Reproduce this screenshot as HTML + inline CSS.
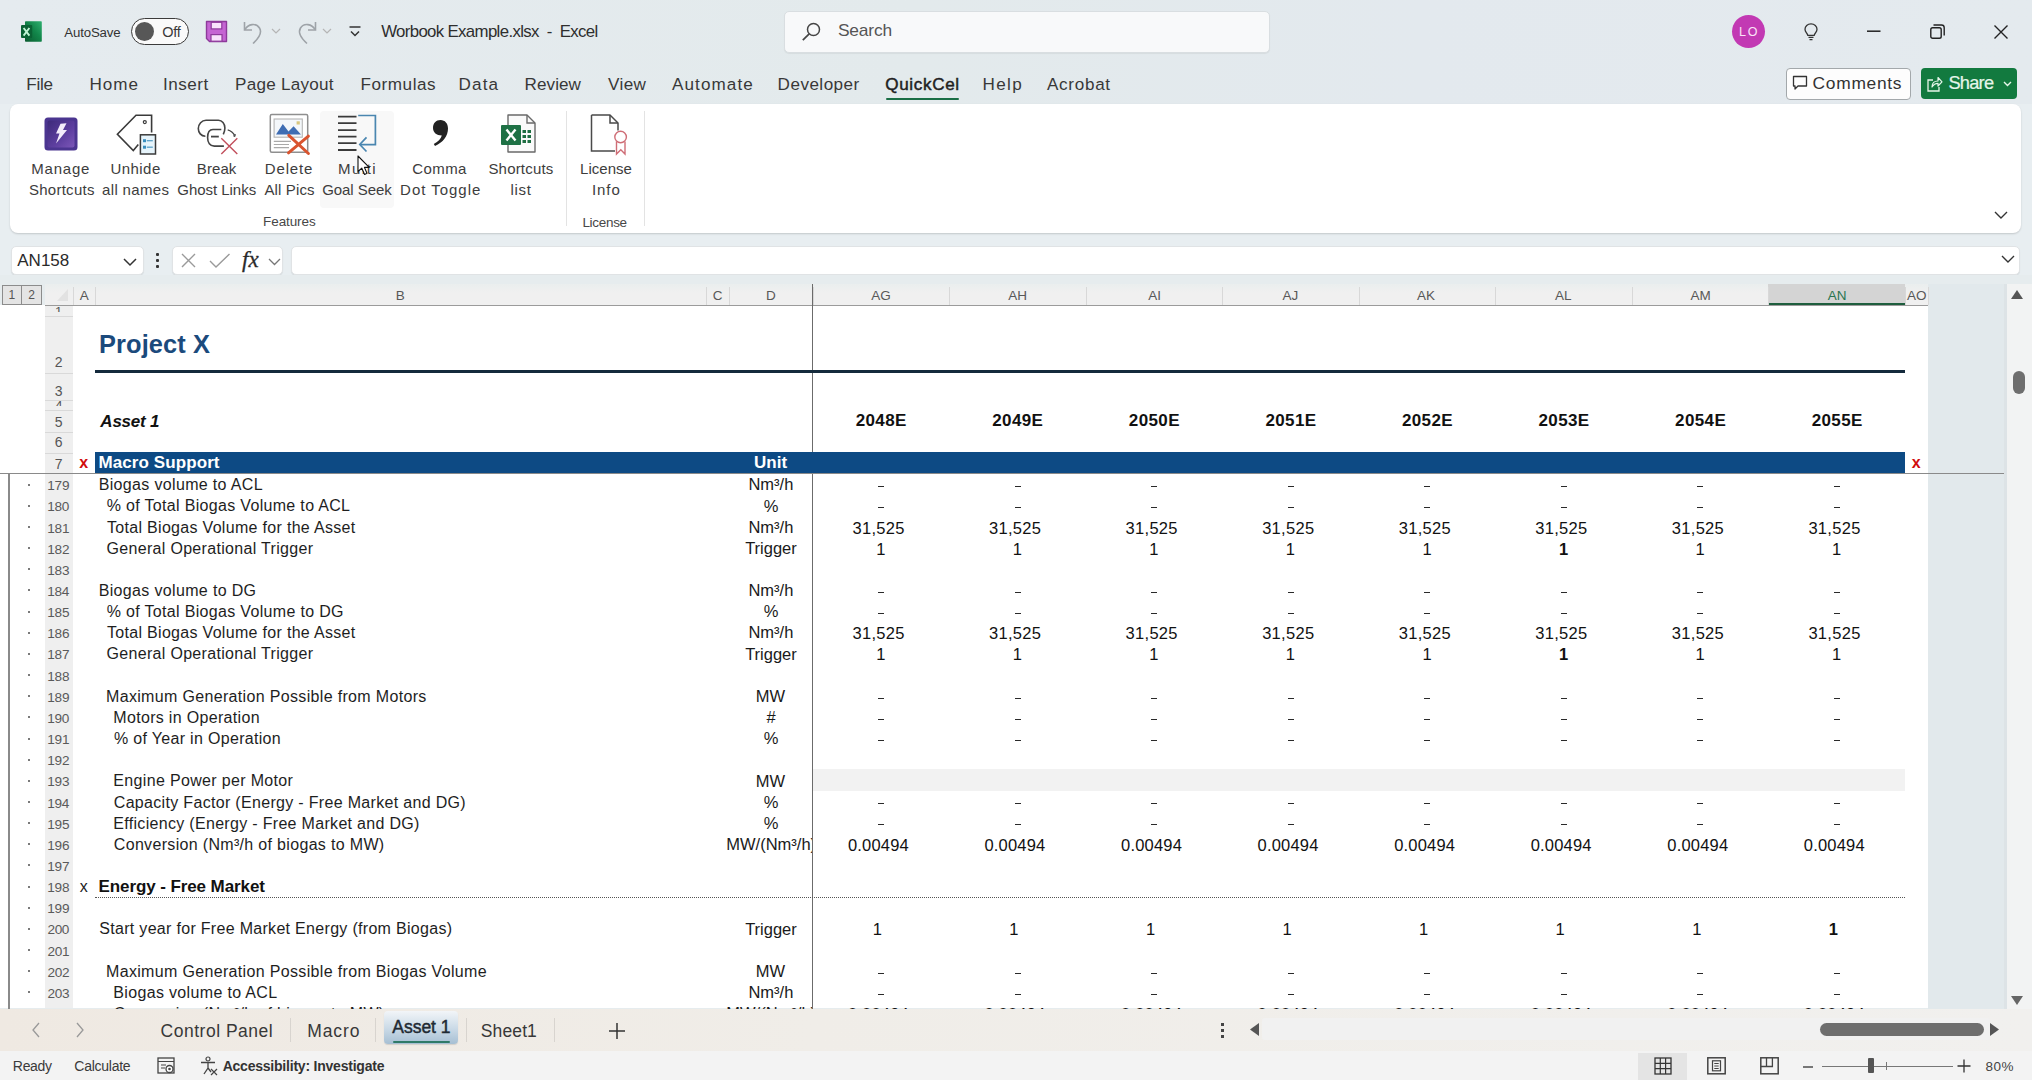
<!DOCTYPE html>
<html><head><meta charset="utf-8">
<style>
*{margin:0;padding:0;box-sizing:border-box}
html,body{width:2032px;height:1080px;overflow:hidden;background:#e8eef1;font-family:"Liberation Sans",sans-serif}
.a{position:absolute}
.t{position:absolute;white-space:nowrap;line-height:1;font-family:"Liberation Sans",sans-serif}
svg{position:absolute;overflow:visible}
</style></head><body>

<div class="a" style="left:0px;top:0px;width:2032px;height:104px;background:linear-gradient(90deg,#e5ebef,#e3eaec 45%,#e3e9ee 70%,#e4eaee)"></div>
<svg style="left:20px;top:20px" width="24" height="24" viewBox="0 0 24 24"><defs><linearGradient id="xg" x1="1" y1="0" x2="0" y2="1"><stop offset="0" stop-color="#2fb070"/><stop offset="0.45" stop-color="#12864a"/><stop offset="1" stop-color="#0a5a2f"/></linearGradient></defs>
<rect x="5" y="1.2" width="16.8" height="20.6" rx="0.8" fill="url(#xg)"/>
<rect x="1" y="5" width="11.2" height="13" rx="1" fill="#0a6234"/>
<path d="M3.6 8 L9.4 15.6 M9.4 8 L3.6 15.6" stroke="#bff5d4" stroke-width="1.9"/></svg>
<div class="t" style="left:64.27px;top:25.65px;font-size:13.26px;color:#333;letter-spacing:-0.156px;">AutoSave</div>
<div class="a" style="left:131px;top:18px;width:58px;height:27px;border:1.5px solid #3b3b3b;border-radius:14px;background:#fafafa"></div>
<div class="a" style="left:135px;top:22px;width:19px;height:19px;border-radius:50%;background:#575757"></div>
<div class="t" style="left:162.21px;top:24.61px;font-size:14.49px;color:#3a3a3a;letter-spacing:-0.249px;">Off</div>
<svg style="left:205px;top:20px" width="24" height="24" viewBox="0 0 24 24"><path d="M1.5 1.5 H21.5 V21.5 H4.5 L1.5 18.5 Z" fill="#c565d3" stroke="#8e3a9b" stroke-width="1.4" stroke-linejoin="round"/>
<rect x="6.2" y="2.3" width="10.6" height="6.6" fill="#f9e2fc" stroke="#8e3a9b" stroke-width="1.2"/>
<rect x="6" y="14.6" width="11" height="6.6" fill="#f9e2fc" stroke="#8e3a9b" stroke-width="1.2"/></svg>
<svg style="left:241px;top:19px" width="26" height="26" viewBox="0 0 26 26"><path d="M3.5 3 V11 H11" stroke="#9ea3a8" stroke-width="1.6" fill="none"/>
<path d="M4 10.5 C7 5 15 3.5 18.5 9 C21.5 14 17 20 12 24.5" stroke="#9ea3a8" stroke-width="1.6" fill="none"/></svg>
<svg style="left:271px;top:28px" width="10" height="7" viewBox="0 0 10 7"><path d="M1 1 L5 5 L9 1" stroke="#b5b5b5" stroke-width="1.2" fill="none"/></svg>
<svg style="left:293px;top:19px" width="26" height="26" viewBox="0 0 26 26"><path d="M22.5 3 V11 H15" stroke="#9ea3a8" stroke-width="1.6" fill="none"/>
<path d="M22 10.5 C19 5 11 3.5 7.5 9 C4.5 14 9 20 14 24.5" stroke="#9ea3a8" stroke-width="1.6" fill="none"/></svg>
<svg style="left:322px;top:28px" width="10" height="7" viewBox="0 0 10 7"><path d="M1 1 L5 5 L9 1" stroke="#b5b5b5" stroke-width="1.2" fill="none"/></svg>
<svg style="left:348px;top:25px" width="14" height="14" viewBox="0 0 14 14"><path d="M1.5 2 H12.5" stroke="#333" stroke-width="1.5"/><path d="M3 6.5 L7 10.5 L11 6.5" stroke="#333" stroke-width="1.5" fill="none"/></svg>
<div class="t" style="left:381.13px;top:23.84px;font-size:16.81px;color:#2e2e2e;letter-spacing:-0.644px;white-space:pre;">Worbook Example.xlsx  -  Excel</div>
<div class="a" style="left:784px;top:11px;width:486px;height:42px;background:#f8f9fa;border:1px solid #d9dee1;border-radius:5px;box-shadow:0 1px 1px rgba(0,0,0,0.06)"></div>
<svg style="left:800px;top:21px" width="22" height="22" viewBox="0 0 22 22"><circle cx="13.5" cy="8.5" r="6" stroke="#454545" stroke-width="1.5" fill="none"/><path d="M9.2 12.8 L2.8 19.2" stroke="#454545" stroke-width="1.7"/></svg>
<div class="t" style="left:837.91px;top:21.55px;font-size:17.39px;color:#555;letter-spacing:-0.177px;">Search</div>
<div class="a" style="left:1732px;top:15px;width:33px;height:33px;border-radius:50%;background:#c239b3"></div>
<div class="t" style="left:1738.97px;top:25.71px;font-size:12.50px;color:#fbe3f7;letter-spacing:1.949px;">LO</div>
<svg style="left:1804px;top:23px" width="14" height="18" viewBox="0 0 14 18"><path d="M7 0.8 C3.5 0.8 1 3.3 1 6.3 C1 9 3 10 3.8 12.3 H10.2 C11 10 13 9 13 6.3 C13 3.3 10.5 0.8 7 0.8 Z" stroke="#333" stroke-width="1.3" fill="none"/><path d="M4.5 14.3 H9.5 M5.5 16.6 H8.5" stroke="#333" stroke-width="1.3"/></svg>
<svg style="left:1866.5px;top:30px" width="14" height="3" viewBox="0 0 14 3"><path d="M0 1.2 H13.5" stroke="#222" stroke-width="1.5"/></svg>
<svg style="left:1930px;top:24px" width="16" height="16" viewBox="0 0 16 16"><rect x="0.8" y="3.8" width="10.4" height="10.4" rx="1.8" stroke="#222" stroke-width="1.4" fill="none"/><path d="M3.5 1 H11.5 Q14.2 1 14.2 3.7 V11.5" stroke="#222" stroke-width="1.4" fill="none"/></svg>
<svg style="left:1994px;top:25px" width="14" height="14" viewBox="0 0 14 14"><path d="M0.5 0.5 L13.5 13.5 M13.5 0.5 L0.5 13.5" stroke="#222" stroke-width="1.4"/></svg>
<div class="t" style="left:26.20px;top:76.20px;font-size:17.10px;color:#383838;letter-spacing:-0.231px;">File</div>
<div class="t" style="left:89.50px;top:76.20px;font-size:17.10px;color:#383838;letter-spacing:0.982px;">Home</div>
<div class="t" style="left:163.02px;top:76.20px;font-size:17.10px;color:#383838;letter-spacing:0.507px;">Insert</div>
<div class="t" style="left:235.10px;top:76.20px;font-size:17.10px;color:#383838;letter-spacing:0.239px;">Page Layout</div>
<div class="t" style="left:360.60px;top:76.20px;font-size:17.10px;color:#383838;letter-spacing:0.536px;">Formulas</div>
<div class="t" style="left:458.60px;top:76.20px;font-size:17.10px;color:#383838;letter-spacing:1.093px;">Data</div>
<div class="t" style="left:524.60px;top:76.20px;font-size:17.10px;color:#383838;letter-spacing:0.058px;">Review</div>
<div class="t" style="left:607.92px;top:76.20px;font-size:17.10px;color:#383838;letter-spacing:0.425px;">View</div>
<div class="t" style="left:671.97px;top:76.20px;font-size:17.10px;color:#383838;letter-spacing:1.085px;">Automate</div>
<div class="t" style="left:777.60px;top:76.20px;font-size:17.10px;color:#383838;letter-spacing:0.467px;">Developer</div>
<div class="t" style="left:885.19px;top:76.20px;font-size:17.10px;color:#222;letter-spacing:0.654px;-webkit-text-stroke:0.45px #1f1f1f;">QuickCel</div>
<div class="t" style="left:982.60px;top:76.20px;font-size:17.10px;color:#383838;letter-spacing:1.316px;">Help</div>
<div class="t" style="left:1046.97px;top:76.20px;font-size:17.10px;color:#383838;letter-spacing:0.704px;">Acrobat</div>
<div class="a" style="left:886px;top:97.5px;width:73px;height:2.8px;background:#1a6e45;border-radius:2px"></div>
<div class="a" style="left:1786px;top:68px;width:125px;height:32px;background:#fdfdfd;border:1px solid #a3a8ab;border-radius:4px"></div>
<svg style="left:1792px;top:75px" width="17" height="16" viewBox="0 0 17 16"><path d="M1.5 1.5 H14.5 V11 H6 L3 14 V11 H1.5 Z" stroke="#333" stroke-width="1.3" fill="none" stroke-linejoin="round"/></svg>
<div class="t" style="left:1812.62px;top:74.75px;font-size:17.39px;color:#333;letter-spacing:0.705px;">Comments</div>
<div class="a" style="left:1921px;top:68px;width:96px;height:31px;background:#127a3f;border-radius:4px"></div>
<svg style="left:1927px;top:75px" width="16" height="17" viewBox="0 0 16 17"><path d="M6 5 H1 V16 H12 V12" stroke="#e6f6ea" stroke-width="1.3" fill="none"/><path d="M5 12 C5 8 7.5 6 11 6 V2.5 L15 6.8 L11 11 V8.3 C8.5 8.3 6.5 9.5 5 12Z" stroke="#e6f6ea" stroke-width="1.2" fill="none" stroke-linejoin="round"/></svg>
<div class="t" style="left:1948.47px;top:74.41px;font-size:18.26px;color:#e6f6ea;letter-spacing:-0.772px;-webkit-text-stroke:0.2px #e6f6ea;">Share</div>
<svg style="left:2003px;top:81px" width="10" height="7" viewBox="0 0 10 7"><path d="M1 1 L4.5 4.5 L8 1" stroke="#e6f6ea" stroke-width="1.4" fill="none"/></svg>
<div class="a" style="left:10px;top:104px;width:2011px;height:129px;background:#fff;border-radius:8px;box-shadow:0 1px 2px rgba(0,0,0,0.16)"></div>
<div class="a" style="left:320px;top:111px;width:74px;height:97px;background:#f8f8f8;border-radius:4px"></div>
<div class="t" style="left:31.37px;top:160.66px;font-size:15.00px;color:#3d3d3d;letter-spacing:0.758px;">Manage</div>
<div class="t" style="left:28.92px;top:181.56px;font-size:15.00px;color:#3d3d3d;letter-spacing:0.270px;">Shortcuts</div>
<div class="t" style="left:110.44px;top:160.66px;font-size:15.00px;color:#3d3d3d;letter-spacing:0.458px;">Unhide</div>
<div class="t" style="left:102.06px;top:181.56px;font-size:15.00px;color:#3d3d3d;letter-spacing:0.335px;">all names</div>
<div class="t" style="left:196.77px;top:160.66px;font-size:15.00px;color:#3d3d3d;letter-spacing:0.106px;">Break</div>
<div class="t" style="left:177.25px;top:181.56px;font-size:15.00px;color:#3d3d3d;letter-spacing:-0.031px;">Ghost Links</div>
<div class="t" style="left:264.77px;top:160.66px;font-size:15.00px;color:#3d3d3d;letter-spacing:0.847px;">Delete</div>
<div class="t" style="left:264.47px;top:181.56px;font-size:15.00px;color:#3d3d3d;letter-spacing:0.128px;">All Pics</div>
<div class="t" style="left:338.07px;top:160.66px;font-size:15.00px;color:#3d3d3d;letter-spacing:1.468px;">Multi</div>
<div class="t" style="left:322.15px;top:181.56px;font-size:15.00px;color:#3d3d3d;letter-spacing:-0.051px;">Goal Seek</div>
<div class="t" style="left:412.24px;top:160.66px;font-size:15.00px;color:#3d3d3d;letter-spacing:0.413px;">Comma</div>
<div class="t" style="left:400.07px;top:181.56px;font-size:15.00px;color:#3d3d3d;letter-spacing:0.984px;">Dot Toggle</div>
<div class="t" style="left:488.42px;top:160.66px;font-size:15.00px;color:#3d3d3d;letter-spacing:0.195px;">Shortcuts</div>
<div class="t" style="left:510.49px;top:181.56px;font-size:15.00px;color:#3d3d3d;letter-spacing:0.696px;">list</div>
<div class="t" style="left:580.07px;top:160.66px;font-size:15.00px;color:#3d3d3d;letter-spacing:0.016px;">License</div>
<div class="t" style="left:591.92px;top:181.56px;font-size:15.00px;color:#3d3d3d;letter-spacing:0.965px;">Info</div>
<div class="t" style="left:263.09px;top:214.51px;font-size:13.50px;color:#474747;letter-spacing:-0.097px;">Features</div>
<div class="t" style="left:582.39px;top:215.51px;font-size:13.50px;color:#474747;letter-spacing:-0.304px;">License</div>
<div class="a" style="left:566px;top:111px;width:1px;height:115px;background:#e3e3e3"></div>
<div class="a" style="left:644px;top:111px;width:1px;height:115px;background:#e3e3e3"></div>
<svg style="left:1994px;top:211px" width="14" height="8" viewBox="0 0 14 8"><path d="M1 1 L7 7 L13 1" stroke="#333" stroke-width="1.4" fill="none"/></svg>
<svg style="left:44px;top:117px" width="34" height="34" viewBox="0 0 34 34"><defs><linearGradient id="gp" x1="0" y1="0" x2="1" y2="1"><stop offset="0" stop-color="#3d2a7a"/><stop offset="0.6" stop-color="#5e3fa0"/><stop offset="1" stop-color="#7c57b8"/></linearGradient></defs>
<rect x="0.5" y="0.5" width="33" height="33" rx="3.5" fill="#4b3590"/>
<rect x="3.5" y="3.5" width="27" height="27" rx="2" fill="url(#gp)"/>
<path d="M16.5 6.8 L22.5 6.3 L19 13 L23 13 L12 26.5 L15.5 16.5 L12 16.5 Z" fill="#f3ecfb"/></svg>
<svg style="left:110px;top:110px" width="50" height="50" viewBox="0 0 50 50"><path d="M41.6 22.4 V5.3 H26 L7.4 24.2 L23.3 40.5 L28.3 34.5" stroke="#3a3a3a" stroke-width="1.6" fill="none" stroke-linejoin="miter"/>
<circle cx="34.8" cy="12.1" r="1.5" stroke="#3a3a3a" stroke-width="1.2" fill="none"/>
<rect x="30.4" y="24.8" width="15.1" height="19.2" fill="#e6f4fb" stroke="#3a3a3a" stroke-width="1.5"/>
<rect x="33" y="29.2" width="3" height="3" fill="#3a8fbf"/><path d="M36.8 30.7 H42.8" stroke="#5aa0c8" stroke-width="1.3"/>
<rect x="33" y="35.7" width="3" height="3" fill="#3a8fbf"/><path d="M36.8 37.2 H42.8" stroke="#5aa0c8" stroke-width="1.3"/></svg>
<svg style="left:190px;top:110px" width="130" height="50" viewBox="0 0 130 50"><path d="M15.4 26.2 C11 26.2 8.3 22.5 8.3 18.6 C8.3 14 11.8 10.2 16 10.2 H28.5 C32 10.2 34.9 13.5 34.9 18 C34.9 20.5 34.2 22.5 33.3 24.3" stroke="#444" stroke-width="1.6" fill="none"/>
<path d="M31.3 19.5 H23 C19.6 19.5 17.6 22.8 17.6 27.6 C17.6 32.6 20 36.1 24.3 36.1 H33.9" stroke="#444" stroke-width="1.6" fill="none"/>
<path d="M21 26.6 H28.8" stroke="#444" stroke-width="1.8"/>
<path d="M37.7 19.8 C40.5 20.6 43.2 22.6 44.8 25.6" stroke="#444" stroke-width="1.3" fill="none"/><path d="M43.2 25.8 L45 26.5 L45.2 24" stroke="#444" stroke-width="1" fill="none"/>
<path d="M31.3 28.2 L47.3 44.1 M47.3 28.2 L31.3 44.1" stroke="#c24f5c" stroke-width="1.4"/>
<rect x="80.3" y="4.5" width="37.4" height="37.7" rx="1.5" fill="#fff" stroke="#8f8f8f" stroke-width="1.5"/>
<rect x="84.1" y="9" width="28.2" height="18.2" fill="#f4f7fa" stroke="#b5b5b5" stroke-width="1.1"/>
<path d="M86 24.6 L92.8 14.1 L98.5 21.5 L103.6 16.3 L111 24.6 Z" fill="#3f6db3"/>
<rect x="106.6" y="11.3" width="3.2" height="3.2" fill="#d8c67e"/>
<path d="M83.8 31.3 H101 M83.8 34.5 H99 M83.8 37.7 H99" stroke="#a9a9a9" stroke-width="1.2"/>
<path d="M98.8 25.3 L118.4 43.5 M118.4 26.2 L98.5 42.9" stroke="#d9542f" stroke-width="3" stroke-linecap="round"/></svg>
<svg style="left:336px;top:113px" width="44" height="42" viewBox="0 0 44 42"><path d="M2 3.7 H20.5 M2 10.2 H20.5 M2 17.1 H20.5 M2 23.7 H20.5 M2 30.2 H20.5 M2 37 H20.5" stroke="#3a3a3a" stroke-width="1.8"/>
<path d="M22.2 2.5 H39.4 V31.6 H24.6" stroke="#4a86b0" stroke-width="1.7" fill="none"/>
<path d="M30.5 24.4 L23.8 31.5 L30.5 38.5" stroke="#4a86b0" stroke-width="1.7" fill="none"/></svg>
<svg style="left:430px;top:118px" width="20" height="30" viewBox="0 0 20 30"><path d="M10.5 2 C15 2 18 5.5 18 10.5 C18 18 13 24.5 5 28 L3.8 26 C8.5 23.5 11 20.5 11.8 17.5 C6.5 17.5 3 14.5 3 10 C3 5 6 2 10.5 2 Z" fill="#222"/></svg>
<svg style="left:500px;top:113px" width="38" height="42" viewBox="0 0 38 42"><path d="M8 2 H27 L35 10 V39 H8 Z" fill="#fafafa" stroke="#6a6a6a" stroke-width="1.4" stroke-linejoin="round"/>
<path d="M27 2 V10 H35" stroke="#6a6a6a" stroke-width="1.4" fill="none"/>
<rect x="22.5" y="17" width="3.5" height="3" fill="#1e6e42"/><rect x="27.5" y="17" width="3.5" height="3" fill="#1e6e42"/>
<rect x="22.5" y="22" width="3.5" height="3" fill="#1e6e42"/><rect x="27.5" y="22" width="3.5" height="3" fill="#1e6e42"/>
<rect x="22.5" y="27" width="3.5" height="3" fill="#1e6e42"/><rect x="27.5" y="27" width="3.5" height="3" fill="#1e6e42"/>
<rect x="1" y="12" width="20" height="20" rx="1" fill="#1d7044"/>
<path d="M6.5 16.5 L15.5 27.5 M15.5 16.5 L6.5 27.5" stroke="#fff" stroke-width="2.4"/></svg>
<svg style="left:589px;top:113px" width="42" height="44" viewBox="0 0 42 44"><path d="M2.5 2 H21 L29 10 V17.5" stroke="#4a4a4a" stroke-width="1.5" fill="none" stroke-linejoin="round"/>
<path d="M2.5 2 V38 H26" stroke="#4a4a4a" stroke-width="1.5" fill="none"/>
<path d="M21 2 V10 H29" stroke="#4a4a4a" stroke-width="1.5" fill="none"/>
<path d="M27.5 28.5 V41 L31.8 36.8 L36 41 V28.5" stroke="#cf6d76" stroke-width="1.4" fill="#fff"/>
<circle cx="31.6" cy="24" r="5.8" stroke="#cf6d76" stroke-width="1.4" fill="#fff"/></svg>
<svg style="left:357px;top:155px" width="14" height="22" viewBox="0 0 14 22"><path d="M1 1 V16.5 L4.8 13.2 L7.6 19.5 L10 18.3 L7.4 12.4 H12.2 Z" fill="#fff" stroke="#111" stroke-width="1.1" stroke-linejoin="round"/></svg>
<div class="a" style="left:11px;top:246px;width:133px;height:29px;background:#fff;border:1px solid #e0e3e5;border-radius:5px;box-shadow:0 1px 1px rgba(0,0,0,0.08)"></div>
<div class="t" style="left:17.27px;top:251.85px;font-size:17.00px;color:#2a2a2a;letter-spacing:-0.002px;">AN158</div>
<svg style="left:123px;top:258px" width="14" height="8" viewBox="0 0 14 8"><path d="M1 1 L7 7 L13 1" stroke="#333" stroke-width="1.5" fill="none"/></svg>
<div class="a" style="left:156px;top:253px;width:3.4px;height:3.4px;background:#333;border-radius:1px"></div>
<div class="a" style="left:156px;top:259px;width:3.4px;height:3.4px;background:#333;border-radius:1px"></div>
<div class="a" style="left:156px;top:265px;width:3.4px;height:3.4px;background:#333;border-radius:1px"></div>
<div class="a" style="left:172px;top:246px;width:111px;height:29px;background:#fff;border:1px solid #e0e3e5;border-radius:5px;box-shadow:0 1px 1px rgba(0,0,0,0.08)"></div>
<svg style="left:181px;top:253px" width="15" height="15" viewBox="0 0 15 15"><path d="M1 1 L14 14 M14 1 L1 14" stroke="#9a9a9a" stroke-width="1.4"/></svg>
<svg style="left:209px;top:253px" width="22" height="15" viewBox="0 0 22 15"><path d="M1 8 L7 14 L20.5 1" stroke="#9a9a9a" stroke-width="1.4" fill="none"/></svg>
<div class="t" style="left:242px;top:248px;font-family:'Liberation Serif',serif;font-style:italic;font-size:23px;color:#2a2a2a;letter-spacing:0px;-webkit-text-stroke:0.3px #2a2a2a">fx</div>
<svg style="left:268px;top:258px" width="13" height="8" viewBox="0 0 13 8"><path d="M1 1 L6.5 6.5 L12 1" stroke="#777" stroke-width="1.3" fill="none"/></svg>
<div class="a" style="left:291px;top:246px;width:1729px;height:29px;background:#fff;border:1px solid #e0e3e5;border-radius:5px;box-shadow:0 1px 1px rgba(0,0,0,0.08)"></div>
<svg style="left:2001px;top:255px" width="14" height="8" viewBox="0 0 14 8"><path d="M1 1 L7 7 L13 1" stroke="#333" stroke-width="1.4" fill="none"/></svg>
<div class="a" style="left:0px;top:275px;width:2032px;height:734px;background:#e6ecee"></div>
<div class="a" style="left:45px;top:284px;width:1883px;height:21.5px;background:linear-gradient(#eaeeee,#f0f0f0 40%,#f0f0f0)"></div>
<div class="a" style="left:2.4px;top:285px;width:20px;height:19.5px;background:#e4e4e4;border:1px solid #8c8c8c"></div>
<div class="a" style="left:22.4px;top:285px;width:19.5px;height:19.5px;background:#e4e4e4;border:1px solid #8c8c8c;border-left:none"></div>
<div class="t" style="left:8.50px;top:289.46px;font-size:12.00px;color:#555;">1</div>
<div class="t" style="left:28.16px;top:289.46px;font-size:12.00px;color:#555;">2</div>
<div class="a" style="left:0px;top:305.3px;width:45px;height:703.2px;background:#fff"></div>
<div class="a" style="left:45px;top:305.3px;width:27.5px;height:703.2px;background:#efefef"></div>
<svg style="left:57px;top:289px" width="12" height="13" viewBox="0 0 12 13"><path d="M11 0 V12 H0 Z" fill="#e2e2e2"/></svg>
<div class="a" style="left:72.5px;top:305.3px;width:1855.5px;height:703.2px;background:#fff"></div>
<div class="a" style="left:1928px;top:284px;width:78px;height:724.5px;background:#e2e9ec"></div>
<div class="a" style="left:2004px;top:284px;width:2.5px;height:724.5px;background:#dde3e6"></div>
<div class="a" style="left:2006.5px;top:284px;width:25.5px;height:724.5px;background:#f2f3f3"></div>
<div class="a" style="left:1768.4px;top:284px;width:136.6px;height:21.3px;background:#d4d4d4"></div>
<div class="a" style="left:1768.4px;top:302.5px;width:136.6px;height:2.5px;background:#1f5e3e"></div>
<div class="a" style="left:72.5px;top:287px;width:1px;height:18px;background:#d8d8d8"></div>
<div class="a" style="left:95.3px;top:287px;width:1px;height:18px;background:#d8d8d8"></div>
<div class="a" style="left:705.9px;top:287px;width:1px;height:18px;background:#d8d8d8"></div>
<div class="a" style="left:728.5px;top:287px;width:1px;height:18px;background:#d8d8d8"></div>
<div class="a" style="left:812.5px;top:287px;width:1px;height:18px;background:#d8d8d8"></div>
<div class="a" style="left:949.0625px;top:287px;width:1px;height:18px;background:#d8d8d8"></div>
<div class="a" style="left:1085.625px;top:287px;width:1px;height:18px;background:#d8d8d8"></div>
<div class="a" style="left:1222.1875px;top:287px;width:1px;height:18px;background:#d8d8d8"></div>
<div class="a" style="left:1358.75px;top:287px;width:1px;height:18px;background:#d8d8d8"></div>
<div class="a" style="left:1495.3125px;top:287px;width:1px;height:18px;background:#d8d8d8"></div>
<div class="a" style="left:1631.875px;top:287px;width:1px;height:18px;background:#d8d8d8"></div>
<div class="a" style="left:1768.4375px;top:287px;width:1px;height:18px;background:#d8d8d8"></div>
<div class="a" style="left:1905.0px;top:287px;width:1px;height:18px;background:#d8d8d8"></div>
<div class="a" style="left:1928px;top:287px;width:1px;height:18px;background:#d8d8d8"></div>
<div class="a" style="left:45px;top:305px;width:1883px;height:1px;background:#9b9b9b"></div>
<div class="t" style="left:79.70px;top:289.01px;font-size:13.50px;color:#585858;">A</div>
<div class="t" style="left:395.80px;top:289.01px;font-size:13.50px;color:#585858;">B</div>
<div class="t" style="left:712.64px;top:289.01px;font-size:13.50px;color:#585858;">C</div>
<div class="t" style="left:765.89px;top:289.01px;font-size:13.50px;color:#585858;">D</div>
<div class="t" style="left:871.24px;top:289.01px;font-size:13.50px;color:#585858;">AG</div>
<div class="t" style="left:1008.16px;top:289.01px;font-size:13.50px;color:#585858;">AH</div>
<div class="t" style="left:1148.23px;top:289.01px;font-size:13.50px;color:#585858;">AI</div>
<div class="t" style="left:1282.61px;top:289.01px;font-size:13.50px;color:#585858;">AJ</div>
<div class="t" style="left:1417.06px;top:289.01px;font-size:13.50px;color:#585858;">AK</div>
<div class="t" style="left:1554.95px;top:289.01px;font-size:13.50px;color:#585858;">AL</div>
<div class="t" style="left:1690.42px;top:289.01px;font-size:13.50px;color:#585858;">AM</div>
<div class="t" style="left:1827.66px;top:289.01px;font-size:13.50px;color:#2a7550;">AN</div>
<div class="t" style="left:1907.06px;top:289.01px;font-size:13.50px;color:#585858;">AO</div>
<div class="a" style="left:812px;top:284px;width:1.2px;height:724.5px;background:#6b6b6b"></div>
<div class="a" style="left:45px;top:315.8px;width:27.5px;height:1px;background:#d9d9d9"></div>
<div class="a" style="left:45px;top:372.5px;width:27.5px;height:1px;background:#d9d9d9"></div>
<div class="a" style="left:45px;top:399.5px;width:27.5px;height:1px;background:#d9d9d9"></div>
<div class="a" style="left:45px;top:410px;width:27.5px;height:1px;background:#d9d9d9"></div>
<div class="a" style="left:45px;top:431.7px;width:27.5px;height:1px;background:#d9d9d9"></div>
<div class="a" style="left:45px;top:452.5px;width:27.5px;height:1px;background:#d9d9d9"></div>
<div class="a" style="left:45px;top:306px;width:27.5px;height:5.5px;overflow:hidden"><div class="t" style="left:9.91px;top:-1.04px;font-size:13.00px;color:#555;">1</div></div>
<div class="t" style="left:54.81px;top:354.66px;font-size:14.00px;color:#555;">2</div>
<div class="t" style="left:54.85px;top:383.76px;font-size:14.00px;color:#555;">3</div>
<div class="a" style="left:45px;top:400.3px;width:27.5px;height:5.5px;overflow:hidden"><div class="t" style="left:10.13px;top:-1.74px;font-size:13.00px;color:#555;">4</div></div>
<div class="t" style="left:54.82px;top:414.66px;font-size:14.00px;color:#555;">5</div>
<div class="t" style="left:54.76px;top:435.46px;font-size:14.00px;color:#555;">6</div>
<div class="t" style="left:54.80px;top:457.16px;font-size:14.00px;color:#555;">7</div>
<div class="t" style="left:99.00px;top:331.92px;font-size:25.40px;color:#1b4a7c;letter-spacing:0.102px;font-weight:bold;">Project X</div>
<div class="a" style="left:94.8px;top:370.2px;width:1810.2px;height:2.6px;background:#142a3c"></div>
<div class="t" style="left:100.35px;top:412.95px;font-size:17.00px;color:#111;letter-spacing:-0.236px;font-weight:bold;font-style:italic;">Asset 1</div>
<div class="t" style="left:855.71px;top:412.15px;font-size:17.00px;color:#111;letter-spacing:0.374px;font-weight:bold;">2048E</div>
<div class="t" style="left:992.27px;top:412.15px;font-size:17.00px;color:#111;letter-spacing:0.374px;font-weight:bold;">2049E</div>
<div class="t" style="left:1128.84px;top:412.15px;font-size:17.00px;color:#111;letter-spacing:0.374px;font-weight:bold;">2050E</div>
<div class="t" style="left:1265.40px;top:412.15px;font-size:17.00px;color:#111;letter-spacing:0.374px;font-weight:bold;">2051E</div>
<div class="t" style="left:1401.96px;top:412.15px;font-size:17.00px;color:#111;letter-spacing:0.374px;font-weight:bold;">2052E</div>
<div class="t" style="left:1538.52px;top:412.15px;font-size:17.00px;color:#111;letter-spacing:0.374px;font-weight:bold;">2053E</div>
<div class="t" style="left:1675.09px;top:412.15px;font-size:17.00px;color:#111;letter-spacing:0.374px;font-weight:bold;">2054E</div>
<div class="t" style="left:1811.65px;top:412.15px;font-size:17.00px;color:#111;letter-spacing:0.374px;font-weight:bold;">2055E</div>
<div class="a" style="left:94.8px;top:452.3px;width:1810.2px;height:20.8px;background:#0d4a84"></div>
<div class="t" style="left:79.25px;top:455.45px;font-size:16.00px;color:#d10d0d;font-weight:bold;">x</div>
<div class="t" style="left:1911.85px;top:455.45px;font-size:16.00px;color:#d10d0d;font-weight:bold;">x</div>
<div class="t" style="left:98.56px;top:454.25px;font-size:17.00px;color:#fff;letter-spacing:0.083px;font-weight:bold;">Macro Support</div>
<div class="t" style="left:753.98px;top:454.25px;font-size:17.00px;color:#fff;letter-spacing:0.061px;font-weight:bold;">Unit</div>
<div class="a" style="left:0px;top:473px;width:2004px;height:1.2px;background:#8a8a8a"></div>
<div class="a" style="left:813.2px;top:768.9px;width:1091.8px;height:22.6px;background:#f2f2f2"></div>
<div class="a" style="left:94.8px;top:896.6px;width:1810.2px;height:0;border-top:1.3px dotted #555"></div>
<div class="a" style="left:0;top:474px;width:2004px;height:534.5px;overflow:hidden">
<div class="a" style="left:28px;top:9.699999999999989px;width:2px;height:2px;background:#7a7a7a"></div>
<div class="t" style="left:47.26px;top:5.26px;font-size:13.60px;color:#5a5a5a;letter-spacing:-0.206px;">179</div>
<div class="t" style="left:98.69px;top:3.25px;font-size:16.00px;color:#1e1e1e;letter-spacing:0.340px;">Biogas volume to ACL</div>
<div class="t" style="left:748.40px;top:2.40px;font-size:16.50px;color:#1a1a1a;">Nm³/h</div>
<div class="a" style="left:878.1px;top:12px;width:6px;height:1.4px;background:#2a2a2a"></div>
<div class="a" style="left:1014.66px;top:12px;width:6px;height:1.4px;background:#2a2a2a"></div>
<div class="a" style="left:1151.22px;top:12px;width:6px;height:1.4px;background:#2a2a2a"></div>
<div class="a" style="left:1287.79px;top:12px;width:6px;height:1.4px;background:#2a2a2a"></div>
<div class="a" style="left:1424.35px;top:12px;width:6px;height:1.4px;background:#2a2a2a"></div>
<div class="a" style="left:1560.91px;top:12px;width:6px;height:1.4px;background:#2a2a2a"></div>
<div class="a" style="left:1697.47px;top:12px;width:6px;height:1.4px;background:#2a2a2a"></div>
<div class="a" style="left:1834.04px;top:12px;width:6px;height:1.4px;background:#2a2a2a"></div>
<div class="a" style="left:28px;top:30.849999999999966px;width:2px;height:2px;background:#7a7a7a"></div>
<div class="t" style="left:47.26px;top:26.41px;font-size:13.60px;color:#5a5a5a;letter-spacing:-0.262px;">180</div>
<div class="t" style="left:106.73px;top:24.40px;font-size:16.00px;color:#1e1e1e;letter-spacing:0.322px;">% of Total Biogas Volume to ACL</div>
<div class="t" style="left:763.66px;top:23.55px;font-size:16.50px;color:#1a1a1a;">%</div>
<div class="a" style="left:878.1px;top:33px;width:6px;height:1.4px;background:#2a2a2a"></div>
<div class="a" style="left:1014.66px;top:33px;width:6px;height:1.4px;background:#2a2a2a"></div>
<div class="a" style="left:1151.22px;top:33px;width:6px;height:1.4px;background:#2a2a2a"></div>
<div class="a" style="left:1287.79px;top:33px;width:6px;height:1.4px;background:#2a2a2a"></div>
<div class="a" style="left:1424.35px;top:33px;width:6px;height:1.4px;background:#2a2a2a"></div>
<div class="a" style="left:1560.91px;top:33px;width:6px;height:1.4px;background:#2a2a2a"></div>
<div class="a" style="left:1697.47px;top:33px;width:6px;height:1.4px;background:#2a2a2a"></div>
<div class="a" style="left:1834.04px;top:33px;width:6px;height:1.4px;background:#2a2a2a"></div>
<div class="a" style="left:28px;top:52.0px;width:2px;height:2px;background:#7a7a7a"></div>
<div class="t" style="left:47.26px;top:47.56px;font-size:13.60px;color:#5a5a5a;letter-spacing:-0.196px;">181</div>
<div class="t" style="left:106.94px;top:45.55px;font-size:16.00px;color:#1e1e1e;letter-spacing:0.309px;">Total Biogas Volume for the Asset</div>
<div class="t" style="left:748.40px;top:44.70px;font-size:16.50px;color:#1a1a1a;">Nm³/h</div>
<div class="t" style="left:852.47px;top:45.50px;font-size:16.50px;color:#111;letter-spacing:0.291px;">31,525</div>
<div class="t" style="left:989.03px;top:45.50px;font-size:16.50px;color:#111;letter-spacing:0.291px;">31,525</div>
<div class="t" style="left:1125.60px;top:45.50px;font-size:16.50px;color:#111;letter-spacing:0.291px;">31,525</div>
<div class="t" style="left:1262.16px;top:45.50px;font-size:16.50px;color:#111;letter-spacing:0.291px;">31,525</div>
<div class="t" style="left:1398.72px;top:45.50px;font-size:16.50px;color:#111;letter-spacing:0.291px;">31,525</div>
<div class="t" style="left:1535.28px;top:45.50px;font-size:16.50px;color:#111;letter-spacing:0.291px;">31,525</div>
<div class="t" style="left:1671.85px;top:45.50px;font-size:16.50px;color:#111;letter-spacing:0.291px;">31,525</div>
<div class="t" style="left:1808.41px;top:45.50px;font-size:16.50px;color:#111;letter-spacing:0.291px;">31,525</div>
<div class="a" style="left:28px;top:73.14999999999998px;width:2px;height:2px;background:#7a7a7a"></div>
<div class="t" style="left:47.26px;top:68.71px;font-size:13.60px;color:#5a5a5a;letter-spacing:-0.186px;">182</div>
<div class="t" style="left:106.50px;top:66.70px;font-size:16.00px;color:#1e1e1e;letter-spacing:0.315px;">General Operational Trigger</div>
<div class="t" style="left:745.13px;top:65.85px;font-size:16.50px;color:#1a1a1a;">Trigger</div>
<div class="t" style="left:876.19px;top:66.65px;font-size:16.50px;color:#111;">1</div>
<div class="t" style="left:1012.75px;top:66.65px;font-size:16.50px;color:#111;">1</div>
<div class="t" style="left:1149.31px;top:66.65px;font-size:16.50px;color:#111;">1</div>
<div class="t" style="left:1285.87px;top:66.65px;font-size:16.50px;color:#111;">1</div>
<div class="t" style="left:1422.44px;top:66.65px;font-size:16.50px;color:#111;">1</div>
<div class="t" style="left:1558.93px;top:66.65px;font-size:16.50px;color:#111;font-weight:bold;">1</div>
<div class="t" style="left:1695.56px;top:66.65px;font-size:16.50px;color:#111;">1</div>
<div class="t" style="left:1832.12px;top:66.65px;font-size:16.50px;color:#111;">1</div>
<div class="a" style="left:28px;top:94.29999999999995px;width:2px;height:2px;background:#7a7a7a"></div>
<div class="t" style="left:47.26px;top:89.86px;font-size:13.60px;color:#5a5a5a;letter-spacing:-0.229px;">183</div>
<div class="a" style="left:28px;top:115.45000000000005px;width:2px;height:2px;background:#7a7a7a"></div>
<div class="t" style="left:47.26px;top:111.01px;font-size:13.60px;color:#5a5a5a;letter-spacing:-0.328px;">184</div>
<div class="t" style="left:98.69px;top:109.00px;font-size:16.00px;color:#1e1e1e;letter-spacing:0.343px;">Biogas volume to DG</div>
<div class="t" style="left:748.40px;top:108.15px;font-size:16.50px;color:#1a1a1a;">Nm³/h</div>
<div class="a" style="left:878.1px;top:118px;width:6px;height:1.4px;background:#2a2a2a"></div>
<div class="a" style="left:1014.66px;top:118px;width:6px;height:1.4px;background:#2a2a2a"></div>
<div class="a" style="left:1151.22px;top:118px;width:6px;height:1.4px;background:#2a2a2a"></div>
<div class="a" style="left:1287.79px;top:118px;width:6px;height:1.4px;background:#2a2a2a"></div>
<div class="a" style="left:1424.35px;top:118px;width:6px;height:1.4px;background:#2a2a2a"></div>
<div class="a" style="left:1560.91px;top:118px;width:6px;height:1.4px;background:#2a2a2a"></div>
<div class="a" style="left:1697.47px;top:118px;width:6px;height:1.4px;background:#2a2a2a"></div>
<div class="a" style="left:1834.04px;top:118px;width:6px;height:1.4px;background:#2a2a2a"></div>
<div class="a" style="left:28px;top:136.60000000000002px;width:2px;height:2px;background:#7a7a7a"></div>
<div class="t" style="left:47.26px;top:132.16px;font-size:13.60px;color:#5a5a5a;letter-spacing:-0.242px;">185</div>
<div class="t" style="left:106.73px;top:130.15px;font-size:16.00px;color:#1e1e1e;letter-spacing:0.323px;">% of Total Biogas Volume to DG</div>
<div class="t" style="left:763.66px;top:129.30px;font-size:16.50px;color:#1a1a1a;">%</div>
<div class="a" style="left:878.1px;top:139px;width:6px;height:1.4px;background:#2a2a2a"></div>
<div class="a" style="left:1014.66px;top:139px;width:6px;height:1.4px;background:#2a2a2a"></div>
<div class="a" style="left:1151.22px;top:139px;width:6px;height:1.4px;background:#2a2a2a"></div>
<div class="a" style="left:1287.79px;top:139px;width:6px;height:1.4px;background:#2a2a2a"></div>
<div class="a" style="left:1424.35px;top:139px;width:6px;height:1.4px;background:#2a2a2a"></div>
<div class="a" style="left:1560.91px;top:139px;width:6px;height:1.4px;background:#2a2a2a"></div>
<div class="a" style="left:1697.47px;top:139px;width:6px;height:1.4px;background:#2a2a2a"></div>
<div class="a" style="left:1834.04px;top:139px;width:6px;height:1.4px;background:#2a2a2a"></div>
<div class="a" style="left:28px;top:157.75px;width:2px;height:2px;background:#7a7a7a"></div>
<div class="t" style="left:47.26px;top:153.31px;font-size:13.60px;color:#5a5a5a;letter-spacing:-0.229px;">186</div>
<div class="t" style="left:106.94px;top:151.30px;font-size:16.00px;color:#1e1e1e;letter-spacing:0.309px;">Total Biogas Volume for the Asset</div>
<div class="t" style="left:748.40px;top:150.45px;font-size:16.50px;color:#1a1a1a;">Nm³/h</div>
<div class="t" style="left:852.47px;top:151.25px;font-size:16.50px;color:#111;letter-spacing:0.291px;">31,525</div>
<div class="t" style="left:989.03px;top:151.25px;font-size:16.50px;color:#111;letter-spacing:0.291px;">31,525</div>
<div class="t" style="left:1125.60px;top:151.25px;font-size:16.50px;color:#111;letter-spacing:0.291px;">31,525</div>
<div class="t" style="left:1262.16px;top:151.25px;font-size:16.50px;color:#111;letter-spacing:0.291px;">31,525</div>
<div class="t" style="left:1398.72px;top:151.25px;font-size:16.50px;color:#111;letter-spacing:0.291px;">31,525</div>
<div class="t" style="left:1535.28px;top:151.25px;font-size:16.50px;color:#111;letter-spacing:0.291px;">31,525</div>
<div class="t" style="left:1671.85px;top:151.25px;font-size:16.50px;color:#111;letter-spacing:0.291px;">31,525</div>
<div class="t" style="left:1808.41px;top:151.25px;font-size:16.50px;color:#111;letter-spacing:0.291px;">31,525</div>
<div class="a" style="left:28px;top:178.89999999999998px;width:2px;height:2px;background:#7a7a7a"></div>
<div class="t" style="left:47.26px;top:174.46px;font-size:13.60px;color:#5a5a5a;letter-spacing:-0.186px;">187</div>
<div class="t" style="left:106.50px;top:172.45px;font-size:16.00px;color:#1e1e1e;letter-spacing:0.315px;">General Operational Trigger</div>
<div class="t" style="left:745.13px;top:171.60px;font-size:16.50px;color:#1a1a1a;">Trigger</div>
<div class="t" style="left:876.19px;top:172.40px;font-size:16.50px;color:#111;">1</div>
<div class="t" style="left:1012.75px;top:172.40px;font-size:16.50px;color:#111;">1</div>
<div class="t" style="left:1149.31px;top:172.40px;font-size:16.50px;color:#111;">1</div>
<div class="t" style="left:1285.87px;top:172.40px;font-size:16.50px;color:#111;">1</div>
<div class="t" style="left:1422.44px;top:172.40px;font-size:16.50px;color:#111;">1</div>
<div class="t" style="left:1558.93px;top:172.40px;font-size:16.50px;color:#111;font-weight:bold;">1</div>
<div class="t" style="left:1695.56px;top:172.40px;font-size:16.50px;color:#111;">1</div>
<div class="t" style="left:1832.12px;top:172.40px;font-size:16.50px;color:#111;">1</div>
<div class="a" style="left:28px;top:200.04999999999995px;width:2px;height:2px;background:#7a7a7a"></div>
<div class="t" style="left:47.26px;top:195.61px;font-size:13.60px;color:#5a5a5a;letter-spacing:-0.232px;">188</div>
<div class="a" style="left:28px;top:221.20000000000005px;width:2px;height:2px;background:#7a7a7a"></div>
<div class="t" style="left:47.26px;top:216.76px;font-size:13.60px;color:#5a5a5a;letter-spacing:-0.206px;">189</div>
<div class="t" style="left:105.99px;top:214.75px;font-size:16.00px;color:#1e1e1e;letter-spacing:0.334px;">Maximum Generation Possible from Motors</div>
<div class="t" style="left:755.69px;top:213.90px;font-size:16.50px;color:#1a1a1a;">MW</div>
<div class="a" style="left:878.1px;top:224px;width:6px;height:1.4px;background:#2a2a2a"></div>
<div class="a" style="left:1014.66px;top:224px;width:6px;height:1.4px;background:#2a2a2a"></div>
<div class="a" style="left:1151.22px;top:224px;width:6px;height:1.4px;background:#2a2a2a"></div>
<div class="a" style="left:1287.79px;top:224px;width:6px;height:1.4px;background:#2a2a2a"></div>
<div class="a" style="left:1424.35px;top:224px;width:6px;height:1.4px;background:#2a2a2a"></div>
<div class="a" style="left:1560.91px;top:224px;width:6px;height:1.4px;background:#2a2a2a"></div>
<div class="a" style="left:1697.47px;top:224px;width:6px;height:1.4px;background:#2a2a2a"></div>
<div class="a" style="left:1834.04px;top:224px;width:6px;height:1.4px;background:#2a2a2a"></div>
<div class="a" style="left:28px;top:242.3499999999999px;width:2px;height:2px;background:#7a7a7a"></div>
<div class="t" style="left:47.26px;top:237.91px;font-size:13.60px;color:#5a5a5a;letter-spacing:-0.262px;">190</div>
<div class="t" style="left:113.29px;top:235.90px;font-size:16.00px;color:#1e1e1e;letter-spacing:0.319px;">Motors in Operation</div>
<div class="t" style="left:766.42px;top:235.05px;font-size:16.50px;color:#1a1a1a;">#</div>
<div class="a" style="left:878.1px;top:245px;width:6px;height:1.4px;background:#2a2a2a"></div>
<div class="a" style="left:1014.66px;top:245px;width:6px;height:1.4px;background:#2a2a2a"></div>
<div class="a" style="left:1151.22px;top:245px;width:6px;height:1.4px;background:#2a2a2a"></div>
<div class="a" style="left:1287.79px;top:245px;width:6px;height:1.4px;background:#2a2a2a"></div>
<div class="a" style="left:1424.35px;top:245px;width:6px;height:1.4px;background:#2a2a2a"></div>
<div class="a" style="left:1560.91px;top:245px;width:6px;height:1.4px;background:#2a2a2a"></div>
<div class="a" style="left:1697.47px;top:245px;width:6px;height:1.4px;background:#2a2a2a"></div>
<div class="a" style="left:1834.04px;top:245px;width:6px;height:1.4px;background:#2a2a2a"></div>
<div class="a" style="left:28px;top:263.5px;width:2px;height:2px;background:#7a7a7a"></div>
<div class="t" style="left:47.26px;top:259.06px;font-size:13.60px;color:#5a5a5a;letter-spacing:-0.196px;">191</div>
<div class="t" style="left:114.03px;top:257.05px;font-size:16.00px;color:#1e1e1e;letter-spacing:0.314px;">% of Year in Operation</div>
<div class="t" style="left:763.66px;top:256.20px;font-size:16.50px;color:#1a1a1a;">%</div>
<div class="a" style="left:878.1px;top:266px;width:6px;height:1.4px;background:#2a2a2a"></div>
<div class="a" style="left:1014.66px;top:266px;width:6px;height:1.4px;background:#2a2a2a"></div>
<div class="a" style="left:1151.22px;top:266px;width:6px;height:1.4px;background:#2a2a2a"></div>
<div class="a" style="left:1287.79px;top:266px;width:6px;height:1.4px;background:#2a2a2a"></div>
<div class="a" style="left:1424.35px;top:266px;width:6px;height:1.4px;background:#2a2a2a"></div>
<div class="a" style="left:1560.91px;top:266px;width:6px;height:1.4px;background:#2a2a2a"></div>
<div class="a" style="left:1697.47px;top:266px;width:6px;height:1.4px;background:#2a2a2a"></div>
<div class="a" style="left:1834.04px;top:266px;width:6px;height:1.4px;background:#2a2a2a"></div>
<div class="a" style="left:28px;top:284.65px;width:2px;height:2px;background:#7a7a7a"></div>
<div class="t" style="left:47.26px;top:280.21px;font-size:13.60px;color:#5a5a5a;letter-spacing:-0.186px;">192</div>
<div class="a" style="left:28px;top:305.79999999999995px;width:2px;height:2px;background:#7a7a7a"></div>
<div class="t" style="left:47.26px;top:301.36px;font-size:13.60px;color:#5a5a5a;letter-spacing:-0.229px;">193</div>
<div class="t" style="left:113.29px;top:299.35px;font-size:16.00px;color:#1e1e1e;letter-spacing:0.338px;">Engine Power per Motor</div>
<div class="t" style="left:755.69px;top:298.50px;font-size:16.50px;color:#1a1a1a;">MW</div>
<div class="a" style="left:28px;top:326.95000000000005px;width:2px;height:2px;background:#7a7a7a"></div>
<div class="t" style="left:47.26px;top:322.51px;font-size:13.60px;color:#5a5a5a;letter-spacing:-0.328px;">194</div>
<div class="t" style="left:113.79px;top:320.50px;font-size:16.00px;color:#1e1e1e;letter-spacing:0.317px;">Capacity Factor (Energy - Free Market and DG)</div>
<div class="t" style="left:763.66px;top:319.65px;font-size:16.50px;color:#1a1a1a;">%</div>
<div class="a" style="left:878.1px;top:329px;width:6px;height:1.4px;background:#2a2a2a"></div>
<div class="a" style="left:1014.66px;top:329px;width:6px;height:1.4px;background:#2a2a2a"></div>
<div class="a" style="left:1151.22px;top:329px;width:6px;height:1.4px;background:#2a2a2a"></div>
<div class="a" style="left:1287.79px;top:329px;width:6px;height:1.4px;background:#2a2a2a"></div>
<div class="a" style="left:1424.35px;top:329px;width:6px;height:1.4px;background:#2a2a2a"></div>
<div class="a" style="left:1560.91px;top:329px;width:6px;height:1.4px;background:#2a2a2a"></div>
<div class="a" style="left:1697.47px;top:329px;width:6px;height:1.4px;background:#2a2a2a"></div>
<div class="a" style="left:1834.04px;top:329px;width:6px;height:1.4px;background:#2a2a2a"></div>
<div class="a" style="left:28px;top:348.0999999999999px;width:2px;height:2px;background:#7a7a7a"></div>
<div class="t" style="left:47.26px;top:343.66px;font-size:13.60px;color:#5a5a5a;letter-spacing:-0.242px;">195</div>
<div class="t" style="left:113.29px;top:341.65px;font-size:16.00px;color:#1e1e1e;letter-spacing:0.311px;">Efficiency (Energy - Free Market and DG)</div>
<div class="t" style="left:763.66px;top:340.80px;font-size:16.50px;color:#1a1a1a;">%</div>
<div class="a" style="left:878.1px;top:350px;width:6px;height:1.4px;background:#2a2a2a"></div>
<div class="a" style="left:1014.66px;top:350px;width:6px;height:1.4px;background:#2a2a2a"></div>
<div class="a" style="left:1151.22px;top:350px;width:6px;height:1.4px;background:#2a2a2a"></div>
<div class="a" style="left:1287.79px;top:350px;width:6px;height:1.4px;background:#2a2a2a"></div>
<div class="a" style="left:1424.35px;top:350px;width:6px;height:1.4px;background:#2a2a2a"></div>
<div class="a" style="left:1560.91px;top:350px;width:6px;height:1.4px;background:#2a2a2a"></div>
<div class="a" style="left:1697.47px;top:350px;width:6px;height:1.4px;background:#2a2a2a"></div>
<div class="a" style="left:1834.04px;top:350px;width:6px;height:1.4px;background:#2a2a2a"></div>
<div class="a" style="left:28px;top:369.25px;width:2px;height:2px;background:#7a7a7a"></div>
<div class="t" style="left:47.26px;top:364.81px;font-size:13.60px;color:#5a5a5a;letter-spacing:-0.229px;">196</div>
<div class="t" style="left:113.79px;top:362.80px;font-size:16.00px;color:#1e1e1e;letter-spacing:0.325px;">Conversion (Nm³/h of biogas to MW)</div>
<div class="a" style="left:700px;top:359.8px;width:112px;height:21px;overflow:hidden"><div class="t" style="left:26.25px;top:2.20px;font-size:16.50px;color:#1a1a1a;">MW/(Nm³/h)</div></div>
<div class="t" style="left:847.91px;top:362.75px;font-size:16.50px;color:#111;letter-spacing:0.197px;">0.00494</div>
<div class="t" style="left:984.47px;top:362.75px;font-size:16.50px;color:#111;letter-spacing:0.197px;">0.00494</div>
<div class="t" style="left:1121.03px;top:362.75px;font-size:16.50px;color:#111;letter-spacing:0.197px;">0.00494</div>
<div class="t" style="left:1257.59px;top:362.75px;font-size:16.50px;color:#111;letter-spacing:0.197px;">0.00494</div>
<div class="t" style="left:1394.16px;top:362.75px;font-size:16.50px;color:#111;letter-spacing:0.197px;">0.00494</div>
<div class="t" style="left:1530.72px;top:362.75px;font-size:16.50px;color:#111;letter-spacing:0.197px;">0.00494</div>
<div class="t" style="left:1667.28px;top:362.75px;font-size:16.50px;color:#111;letter-spacing:0.197px;">0.00494</div>
<div class="t" style="left:1803.84px;top:362.75px;font-size:16.50px;color:#111;letter-spacing:0.197px;">0.00494</div>
<div class="a" style="left:28px;top:390.4px;width:2px;height:2px;background:#7a7a7a"></div>
<div class="t" style="left:47.26px;top:385.96px;font-size:13.60px;color:#5a5a5a;letter-spacing:-0.186px;">197</div>
<div class="a" style="left:28px;top:411.54999999999995px;width:2px;height:2px;background:#7a7a7a"></div>
<div class="t" style="left:47.26px;top:407.11px;font-size:13.60px;color:#5a5a5a;letter-spacing:-0.232px;">198</div>
<div class="t" style="left:79.70px;top:404.50px;font-size:16.00px;color:#222;">x</div>
<div class="t" style="left:98.56px;top:404.00px;font-size:17.00px;color:#111;letter-spacing:-0.096px;font-weight:bold;">Energy - Free Market</div>
<div class="a" style="left:28px;top:432.70000000000005px;width:2px;height:2px;background:#7a7a7a"></div>
<div class="t" style="left:47.26px;top:428.26px;font-size:13.60px;color:#5a5a5a;letter-spacing:-0.206px;">199</div>
<div class="a" style="left:28px;top:453.8499999999999px;width:2px;height:2px;background:#7a7a7a"></div>
<div class="t" style="left:47.62px;top:449.41px;font-size:13.60px;color:#5a5a5a;letter-spacing:-0.438px;">200</div>
<div class="t" style="left:99.27px;top:447.40px;font-size:16.00px;color:#1e1e1e;letter-spacing:0.305px;">Start year for Free Market Energy (from Biogas)</div>
<div class="t" style="left:745.13px;top:446.55px;font-size:16.50px;color:#1a1a1a;">Trigger</div>
<div class="t" style="left:872.79px;top:447.35px;font-size:16.50px;color:#111;">1</div>
<div class="t" style="left:1009.35px;top:447.35px;font-size:16.50px;color:#111;">1</div>
<div class="t" style="left:1145.91px;top:447.35px;font-size:16.50px;color:#111;">1</div>
<div class="t" style="left:1282.47px;top:447.35px;font-size:16.50px;color:#111;">1</div>
<div class="t" style="left:1419.04px;top:447.35px;font-size:16.50px;color:#111;">1</div>
<div class="t" style="left:1555.60px;top:447.35px;font-size:16.50px;color:#111;">1</div>
<div class="t" style="left:1692.16px;top:447.35px;font-size:16.50px;color:#111;">1</div>
<div class="t" style="left:1828.66px;top:447.35px;font-size:16.50px;color:#111;font-weight:bold;">1</div>
<div class="a" style="left:28px;top:475.0px;width:2px;height:2px;background:#7a7a7a"></div>
<div class="t" style="left:47.62px;top:470.56px;font-size:13.60px;color:#5a5a5a;letter-spacing:-0.372px;">201</div>
<div class="a" style="left:28px;top:496.15px;width:2px;height:2px;background:#7a7a7a"></div>
<div class="t" style="left:47.62px;top:491.71px;font-size:13.60px;color:#5a5a5a;letter-spacing:-0.362px;">202</div>
<div class="t" style="left:105.99px;top:489.70px;font-size:16.00px;color:#1e1e1e;letter-spacing:0.336px;">Maximum Generation Possible from Biogas Volume</div>
<div class="t" style="left:755.69px;top:488.85px;font-size:16.50px;color:#1a1a1a;">MW</div>
<div class="a" style="left:878.1px;top:499px;width:6px;height:1.4px;background:#2a2a2a"></div>
<div class="a" style="left:1014.66px;top:499px;width:6px;height:1.4px;background:#2a2a2a"></div>
<div class="a" style="left:1151.22px;top:499px;width:6px;height:1.4px;background:#2a2a2a"></div>
<div class="a" style="left:1287.79px;top:499px;width:6px;height:1.4px;background:#2a2a2a"></div>
<div class="a" style="left:1424.35px;top:499px;width:6px;height:1.4px;background:#2a2a2a"></div>
<div class="a" style="left:1560.91px;top:499px;width:6px;height:1.4px;background:#2a2a2a"></div>
<div class="a" style="left:1697.47px;top:499px;width:6px;height:1.4px;background:#2a2a2a"></div>
<div class="a" style="left:1834.04px;top:499px;width:6px;height:1.4px;background:#2a2a2a"></div>
<div class="a" style="left:28px;top:517.3px;width:2px;height:2px;background:#7a7a7a"></div>
<div class="t" style="left:47.62px;top:512.86px;font-size:13.60px;color:#5a5a5a;letter-spacing:-0.405px;">203</div>
<div class="t" style="left:113.29px;top:510.85px;font-size:16.00px;color:#1e1e1e;letter-spacing:0.340px;">Biogas volume to ACL</div>
<div class="t" style="left:748.40px;top:510.00px;font-size:16.50px;color:#1a1a1a;">Nm³/h</div>
<div class="a" style="left:878.1px;top:520px;width:6px;height:1.4px;background:#2a2a2a"></div>
<div class="a" style="left:1014.66px;top:520px;width:6px;height:1.4px;background:#2a2a2a"></div>
<div class="a" style="left:1151.22px;top:520px;width:6px;height:1.4px;background:#2a2a2a"></div>
<div class="a" style="left:1287.79px;top:520px;width:6px;height:1.4px;background:#2a2a2a"></div>
<div class="a" style="left:1424.35px;top:520px;width:6px;height:1.4px;background:#2a2a2a"></div>
<div class="a" style="left:1560.91px;top:520px;width:6px;height:1.4px;background:#2a2a2a"></div>
<div class="a" style="left:1697.47px;top:520px;width:6px;height:1.4px;background:#2a2a2a"></div>
<div class="a" style="left:1834.04px;top:520px;width:6px;height:1.4px;background:#2a2a2a"></div>
<div class="a" style="left:28px;top:538.45px;width:2px;height:2px;background:#7a7a7a"></div>
<div class="t" style="left:47.62px;top:534.01px;font-size:13.60px;color:#5a5a5a;letter-spacing:-0.504px;">204</div>
<div class="t" style="left:113.79px;top:532.00px;font-size:16.00px;color:#1e1e1e;letter-spacing:0.325px;">Conversion (Nm³/h of biogas to MW)</div>
<div class="a" style="left:700px;top:529.0px;width:112px;height:21px;overflow:hidden"><div class="t" style="left:26.25px;top:2.20px;font-size:16.50px;color:#1a1a1a;">MW/(Nm³/h)</div></div>
<div class="t" style="left:847.91px;top:531.95px;font-size:16.50px;color:#111;letter-spacing:0.197px;">0.00494</div>
<div class="t" style="left:984.47px;top:531.95px;font-size:16.50px;color:#111;letter-spacing:0.197px;">0.00494</div>
<div class="t" style="left:1121.03px;top:531.95px;font-size:16.50px;color:#111;letter-spacing:0.197px;">0.00494</div>
<div class="t" style="left:1257.59px;top:531.95px;font-size:16.50px;color:#111;letter-spacing:0.197px;">0.00494</div>
<div class="t" style="left:1394.16px;top:531.95px;font-size:16.50px;color:#111;letter-spacing:0.197px;">0.00494</div>
<div class="t" style="left:1530.72px;top:531.95px;font-size:16.50px;color:#111;letter-spacing:0.197px;">0.00494</div>
<div class="t" style="left:1667.28px;top:531.95px;font-size:16.50px;color:#111;letter-spacing:0.197px;">0.00494</div>
<div class="t" style="left:1803.84px;top:531.95px;font-size:16.50px;color:#111;letter-spacing:0.197px;">0.00494</div>
</div>
<div class="a" style="left:8px;top:474px;width:1.8px;height:534.5px;background:#8a8a8a"></div>
<div class="a" style="left:0px;top:1008.5px;width:2032px;height:42.5px;background:linear-gradient(90deg,#efe9e2,#f0ede8 40%,#f1f0ee)"></div>
<svg style="left:32px;top:1022px" width="8" height="16" viewBox="0 0 8 16"><path d="M7 1 L1 8 L7 15" stroke="#999" stroke-width="1.3" fill="none"/></svg>
<svg style="left:76px;top:1022px" width="8" height="16" viewBox="0 0 8 16"><path d="M1 1 L7 8 L1 15" stroke="#999" stroke-width="1.3" fill="none"/></svg>
<div class="t" style="left:160.61px;top:1022.60px;font-size:17.50px;color:#383838;letter-spacing:0.502px;">Control Panel</div>
<div class="a" style="left:290px;top:1018px;width:1px;height:24px;background:#d8d4cf"></div>
<div class="t" style="left:307.26px;top:1022.60px;font-size:17.50px;color:#383838;letter-spacing:0.887px;">Macro</div>
<div class="a" style="left:375px;top:1018px;width:1px;height:24px;background:#d8d4cf"></div>
<div class="a" style="left:383.6px;top:1010.8px;width:74.4px;height:33px;background:linear-gradient(#f2f5f8,#c9d9e6 55%,#a6bfd3);border-radius:4px;box-shadow:0 1px 1px rgba(0,0,0,0.12)"></div>
<div class="t" style="left:392.27px;top:1018.50px;font-size:17.50px;color:#1f2a33;letter-spacing:-0.012px;-webkit-text-stroke:0.45px #1f2a33;">Asset 1</div>
<div class="a" style="left:393px;top:1040.5px;width:57px;height:2.5px;background:#2f7a68;border-radius:1px"></div>
<div class="a" style="left:465.5px;top:1018px;width:1px;height:24px;background:#d8d4cf"></div>
<div class="t" style="left:480.81px;top:1022.60px;font-size:17.50px;color:#383838;letter-spacing:0.117px;">Sheet1</div>
<div class="a" style="left:553.6px;top:1018px;width:1px;height:24px;background:#d8d4cf"></div>
<svg style="left:608px;top:1022px" width="18" height="18" viewBox="0 0 18 18"><path d="M9 1 V17 M1 9 H17" stroke="#333" stroke-width="1.5"/></svg>
<div class="a" style="left:1221px;top:1023px;width:3px;height:3px;background:#444"></div>
<div class="a" style="left:1221px;top:1029px;width:3px;height:3px;background:#444"></div>
<div class="a" style="left:1221px;top:1035px;width:3px;height:3px;background:#444"></div>
<svg style="left:1250px;top:1023px" width="10" height="13" viewBox="0 0 10 13"><path d="M9 0 V13 L0 6.5 Z" fill="#555"/></svg>
<div class="a" style="left:1262px;top:1018px;width:728px;height:22px;background:#f1f1f1;border-radius:3px"></div>
<div class="a" style="left:1820px;top:1023px;width:164px;height:13px;background:#6e6e6e;border-radius:7px"></div>
<svg style="left:1990px;top:1023px" width="10" height="13" viewBox="0 0 10 13"><path d="M0 0 V13 L9 6.5 Z" fill="#555"/></svg>
<div class="a" style="left:0px;top:1051px;width:2032px;height:29px;background:#f3f3f3"></div>
<div class="t" style="left:12.85px;top:1059.46px;font-size:14.00px;color:#3a3a3a;letter-spacing:-0.323px;">Ready</div>
<div class="t" style="left:74.29px;top:1059.46px;font-size:14.00px;color:#3a3a3a;letter-spacing:-0.254px;">Calculate</div>
<svg style="left:157px;top:1057px" width="19" height="18" viewBox="0 0 19 18"><rect x="1" y="1" width="16" height="15" stroke="#444" stroke-width="1.3" fill="none"/><path d="M1 4.5 H17 M4 8 H9 M4 11 H8" stroke="#444" stroke-width="1.2"/><circle cx="12.5" cy="12" r="3.5" stroke="#444" stroke-width="1.3" fill="#fff"/><circle cx="12.5" cy="12" r="1.3" fill="#444"/></svg>
<svg style="left:199px;top:1056px" width="20" height="20" viewBox="0 0 20 20"><circle cx="9" cy="3" r="2" stroke="#444" stroke-width="1.2" fill="none"/><path d="M2 6.5 H16 M9 6.5 V12 L5 18 M9 12 L12 16" stroke="#444" stroke-width="1.3" fill="none"/><path d="M12 13 L18 19 M18 13 L12 19" stroke="#444" stroke-width="1.2"/></svg>
<div class="t" style="left:222.65px;top:1059.46px;font-size:14.00px;color:#333;letter-spacing:-0.219px;font-weight:bold;">Accessibility: Investigate</div>
<div class="a" style="left:1638px;top:1053px;width:49px;height:27px;background:#e4e4e4"></div>
<svg style="left:1654px;top:1057px" width="18" height="18" viewBox="0 0 18 18"><rect x="1" y="1" width="16" height="16" stroke="#333" stroke-width="1.3" fill="none"/><path d="M1 6.3 H17 M1 11.6 H17 M6.3 1 V17 M11.6 1 V17" stroke="#333" stroke-width="1.2"/></svg>
<svg style="left:1707px;top:1057px" width="19" height="18" viewBox="0 0 19 18"><rect x="0.8" y="0.8" width="17.4" height="16" stroke="#444" stroke-width="1.5" fill="none"/><rect x="5.5" y="3.8" width="8" height="10" stroke="#444" stroke-width="1.2" fill="none"/><path d="M7.3 6.5 H11.7 M7.3 9 H11.7 M7.3 11.5 H11.7" stroke="#444" stroke-width="1"/></svg>
<svg style="left:1760px;top:1057px" width="19" height="18" viewBox="0 0 19 18"><rect x="0.8" y="0.8" width="17.4" height="16" stroke="#444" stroke-width="1.5" fill="none"/><path d="M0.8 9.5 H12.4 V0.8 M6.5 0.8 V9.5" stroke="#444" stroke-width="1.3" fill="none"/></svg>
<svg style="left:1803px;top:1066px" width="12" height="2" viewBox="0 0 12 2"><path d="M0 1 H10" stroke="#333" stroke-width="1.3"/></svg>
<div class="a" style="left:1822px;top:1065.5px;width:131px;height:1px;background:#777"></div>
<div class="a" style="left:1868px;top:1058px;width:6px;height:15px;background:#555;border-radius:1px"></div>
<div class="a" style="left:1886px;top:1062px;width:1px;height:8px;background:#777"></div>
<svg style="left:1957px;top:1059px" width="14" height="14" viewBox="0 0 14 14"><path d="M7 0.5 V13.5 M0.5 7 H13.5" stroke="#333" stroke-width="1.3"/></svg>
<div class="t" style="left:1985.41px;top:1059.71px;font-size:13.50px;color:#444;letter-spacing:0.524px;">80%</div>
<svg style="left:2011px;top:290px" width="12" height="9" viewBox="0 0 12 9"><path d="M0 9 L6 0 L12 9 Z" fill="#555"/></svg>
<div class="a" style="left:2013.3px;top:371.4px;width:11.8px;height:22.2px;background:#6e6e6e;border-radius:6px"></div>
<svg style="left:2011px;top:996px" width="12" height="9" viewBox="0 0 12 9"><path d="M0 0 L6 9 L12 0 Z" fill="#666"/></svg>
</body></html>
